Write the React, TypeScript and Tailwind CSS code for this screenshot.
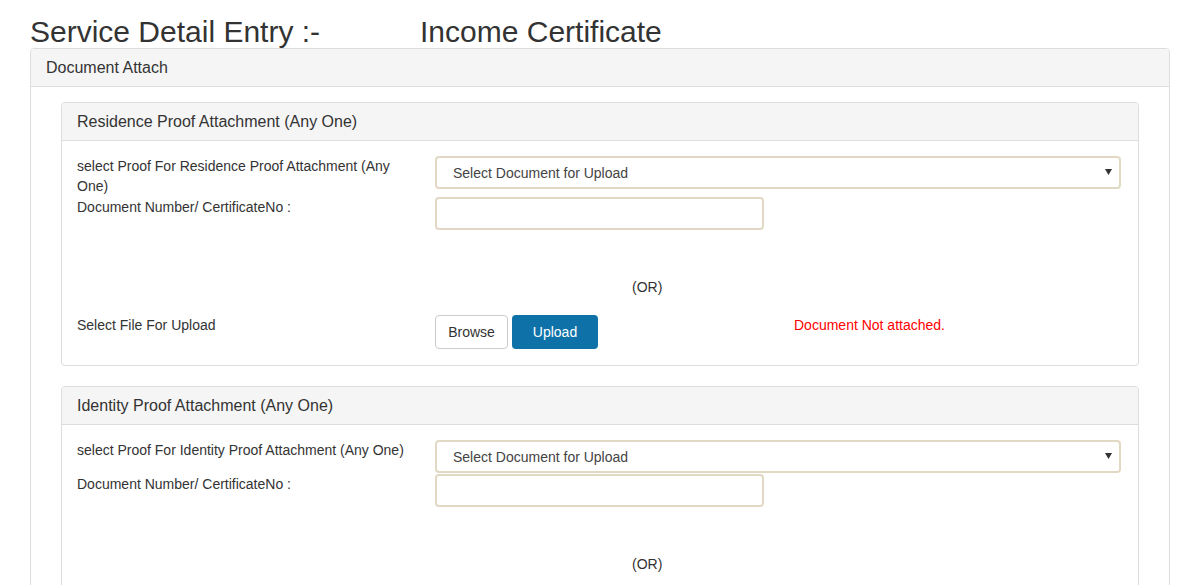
const font = { fontFamily: '"Liberation Sans", Arial, Helvetica, sans-serif' };

type Attachment = {
  title: string;
  selectLabel: string;
};

const attachments: Attachment[] = [
  {
    title: "Residence Proof Attachment (Any One)",
    selectLabel: "select Proof For Residence Proof Attachment (Any One)",
  },
  {
    title: "Identity Proof Attachment (Any One)",
    selectLabel: "select Proof For Identity Proof Attachment (Any One)",
  },
];

function DocSelect() {
  return (
    <div className="relative h-[33px] w-full">
      <select
        className="h-full w-full appearance-none rounded-[4px] border-2 border-[#e2d9c5] bg-white pl-[16px] text-[14px] text-[#444] outline-none"
        defaultValue=""
        style={font}
      >
        <option value="">Select Document for Upload</option>
      </select>
      {/* dropdown caret */}
      <svg className="pointer-events-none absolute right-[9px] top-[13px]" width="7" height="6" viewBox="0 0 7 6">
        <path d="M0 0 L7 0 L3.5 6 Z" fill="#333" />
      </svg>
    </div>
  );
}

function AttachmentPanel({ item }: { item: Attachment }) {
  return (
    <div className="mb-[20px] rounded-[4px] border border-[#ddd] bg-white">
      <div className="flex h-[38px] items-center rounded-t-[4px] border-b border-[#ddd] bg-[#f5f5f5] px-[15px] pt-[1px] text-[16px] text-[#333]">
        {item.title}
      </div>
      <div className="px-[15px] pb-[16px] pt-[15px] text-[14px] leading-[20px] text-[#333]">
        <div className="grid grid-cols-[329px_1fr] gap-x-[29px]">
          <div>{item.selectLabel}</div>
          <div className="pr-[2px]">
            <DocSelect />
          </div>
          <div className="pt-[1px]">Document Number/ CertificateNo :</div>
          <div className="pt-[1px]">
            <input
              type="text"
              className="h-[33px] w-[329px] rounded-[4px] border-2 border-[#e2d9c5] bg-white px-[10px] text-[14px] outline-none"
              style={font}
            />
          </div>
        </div>

        <div className="ml-[555px] mt-[47px]">(OR)</div>

        <div className="mt-[18px] grid grid-cols-[329px_1fr] gap-x-[29px]">
          <div>Select File For Upload</div>
          <div className="flex items-start">
            <button className="h-[34px] w-[73px] rounded-[4px] border border-[#ccc] bg-white text-[14px] text-[#333]">
              Browse
            </button>
            <button className="ml-[4px] h-[34px] w-[86px] rounded-[4px] bg-[#0e72a9] text-[14px] text-white">
              Upload
            </button>
            <span className="ml-[196px] text-[#ff0000]">Document Not attached.</span>
          </div>
        </div>
      </div>
    </div>
  );
}

export default function App() {
  return (
    <div className="min-h-screen bg-white text-[#333]" style={font}>
      <div className="ml-[30px] w-[1140px]">
        <div className="flex pt-[15px] text-[30px] leading-[33px]">
          <span className="w-[390px]">Service Detail Entry :-</span>
          <span>Income Certificate</span>
        </div>

        <div className="rounded-[4px] border border-[#ddd] bg-white">
          <div className="flex h-[38px] items-center rounded-t-[4px] border-b border-[#ddd] bg-[#f5f5f5] px-[15px] pt-[1px] text-[16px] text-[#333]">
            Document Attach
          </div>
          <div className="px-[30px] pt-[15px]">
            {attachments.map((item) => (
              <AttachmentPanel key={item.title} item={item} />
            ))}
          </div>
        </div>
      </div>
    </div>
  );
}
